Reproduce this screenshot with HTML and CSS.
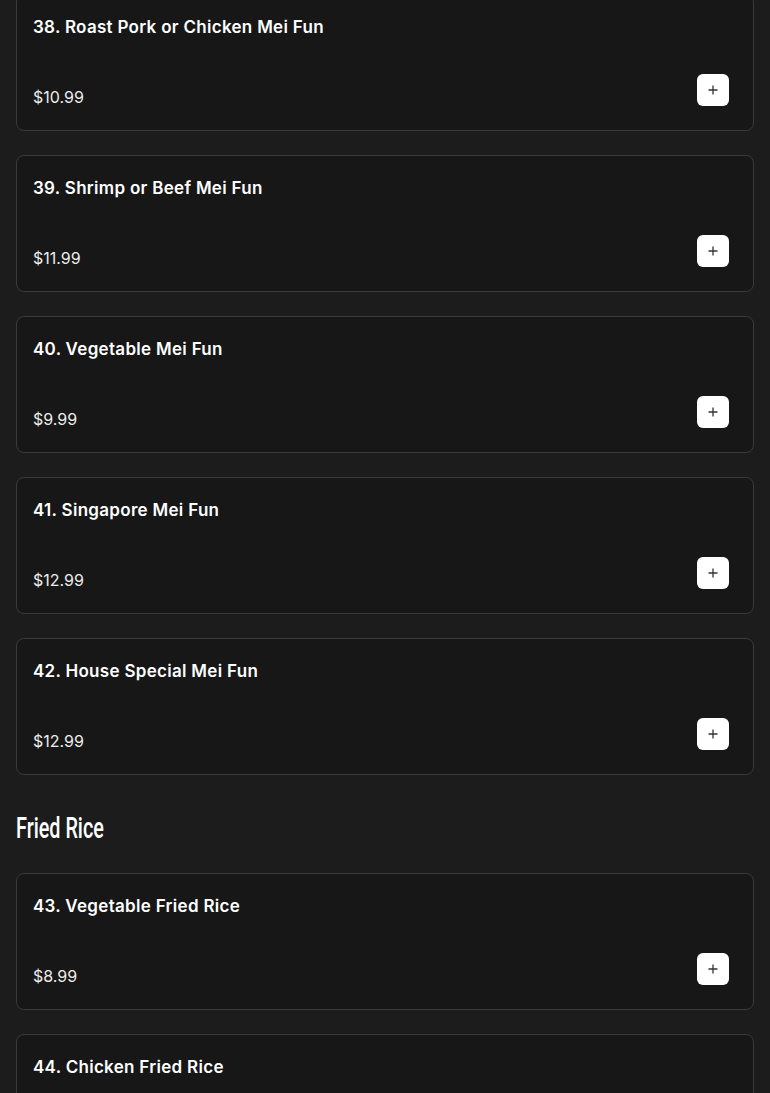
FILE: index.html
```html
<!DOCTYPE html>
<html>
<head>
<meta charset="utf-8">
<link rel="stylesheet" href="styles.css">
</head>
<body>
<main class="menu">
  <section class="section">
    <div class="cards">
      <div class="card"><div class="title">38. Roast Pork or Chicken Mei Fun</div><div class="row"><span class="price">$10.99</span><button class="add"><svg viewBox="0 0 12 12" width="12" height="12"><path d="M6 1.5v9M1.5 6h9" stroke="#333" stroke-width="1.3" fill="none"/></svg></button></div></div>
      <div class="card"><div class="title">39. Shrimp or Beef Mei Fun</div><div class="row"><span class="price">$11.99</span><button class="add"><svg viewBox="0 0 12 12" width="12" height="12"><path d="M6 1.5v9M1.5 6h9" stroke="#333" stroke-width="1.3" fill="none"/></svg></button></div></div>
      <div class="card"><div class="title">40. Vegetable Mei Fun</div><div class="row"><span class="price">$9.99</span><button class="add"><svg viewBox="0 0 12 12" width="12" height="12"><path d="M6 1.5v9M1.5 6h9" stroke="#333" stroke-width="1.3" fill="none"/></svg></button></div></div>
      <div class="card"><div class="title">41. Singapore Mei Fun</div><div class="row"><span class="price">$12.99</span><button class="add"><svg viewBox="0 0 12 12" width="12" height="12"><path d="M6 1.5v9M1.5 6h9" stroke="#333" stroke-width="1.3" fill="none"/></svg></button></div></div>
      <div class="card"><div class="title">42. House Special Mei Fun</div><div class="row"><span class="price">$12.99</span><button class="add"><svg viewBox="0 0 12 12" width="12" height="12"><path d="M6 1.5v9M1.5 6h9" stroke="#333" stroke-width="1.3" fill="none"/></svg></button></div></div>
    </div>
  </section>
  <section class="section">
    <h2 class="heading"><span class="heading-text">Fried Rice</span></h2>
    <div class="cards">
      <div class="card"><div class="title">43. Vegetable Fried Rice</div><div class="row"><span class="price">$8.99</span><button class="add"><svg viewBox="0 0 12 12" width="12" height="12"><path d="M6 1.5v9M1.5 6h9" stroke="#333" stroke-width="1.3" fill="none"/></svg></button></div></div>
      <div class="card"><div class="title">44. Chicken Fried Rice</div><div class="row"><span class="price">$9.99</span><button class="add"><svg viewBox="0 0 12 12" width="12" height="12"><path d="M6 1.5v9M1.5 6h9" stroke="#333" stroke-width="1.3" fill="none"/></svg></button></div></div>
    </div>
  </section>
</main>
</body>
</html>
```
FILE: styles.css
```css
html, body { background: #1c1c1c; }
body {
  margin: 0;
  padding: 0 16px;
  font-family: "Inter", "Noto Sans", sans-serif;
  color: #fff;
  overflow: hidden;
  height: 1093px;
}
.menu { margin-top: -6px; }
.cards { display: flex; flex-direction: column; gap: 24px; }
.card {
  background: #171717;
  border: 1px solid #3a3a3a;
  border-radius: 8px;
  padding: 17px 24px 21px 16px;
}
.title {
  font-size: 17px;
  font-weight: 600;
  line-height: 30px;
  letter-spacing: 0.3px;
}
.row {
  margin-top: 32px;
  display: flex;
  justify-content: space-between;
  align-items: flex-end;
}
.price {
  font-size: 16px;
  line-height: 24px;
  font-weight: 400;
  color: #ececec;
}
.add {
  width: 32px;
  height: 32px;
  margin-bottom: 3px;
  border: none;
  border-radius: 6px;
  background: #fff;
  display: flex;
  align-items: center;
  justify-content: center;
  padding: 0;
}
.heading {
  margin: 36px 0 28px;
  font-family: "Roboto", "Liberation Sans", sans-serif;
  font-weight: 500;
  font-size: 30px;
  line-height: 34px;
  color: #fff;
}
.heading-text {
  display: inline-block;
  transform: scaleX(0.66);
  transform-origin: left center;
}
```
